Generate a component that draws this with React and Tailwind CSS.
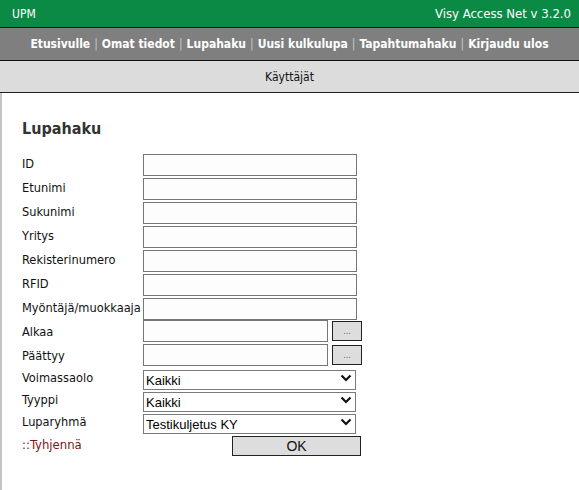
import { useState } from 'react';

const ui = { fontFamily: "'DejaVu Sans Condensed', 'DejaVu Sans', sans-serif" };
const ctl = { fontFamily: "'Liberation Sans', Arial, sans-serif" };

function Chevron() {
  return (
    <svg className="pointer-events-none absolute right-[4px] top-[5px] w-[12px] h-[10px]" viewBox="0 0 12 10">
      <path d="M1.5 2.5 L6 7 L10.5 2.5" fill="none" stroke="#111" strokeWidth="2.2" />
    </svg>
  );
}

function TextRow({ label }) {
  return (
    <>
      <label className="text-[12.7px] text-[#111] leading-[24px] whitespace-nowrap">{label}</label>
      <div className="h-[24px]">
        <input
          type="text"
          className="w-[214px] h-[22px] border border-[#767676] bg-[#fdfdfd] outline-none px-1 text-[13px]"
          style={ctl}
        />
      </div>
    </>
  );
}

function DateRow({ label }) {
  return (
    <>
      <label className="text-[12.7px] text-[#111] leading-[24px]">{label}</label>
      <div className="h-[24px] flex items-start gap-[4px]">
        <input
          type="text"
          className="w-[185px] h-[22px] border border-[#767676] bg-[#fdfdfd] outline-none px-1 text-[13px]"
          style={ctl}
        />
        <button className="mt-[1px] w-[30px] h-[20px] border border-[#222] bg-[#dddddd] text-[9px] text-[#666] leading-none">
          ...
        </button>
      </div>
    </>
  );
}

function SelectRow({ label, options, value, onChange }) {
  return (
    <>
      <label className="text-[12.7px] text-[#111] leading-[20px]">{label}</label>
      <div className="h-[22px]">
        <div className="relative w-[213px] h-[20px]">
          <select
            value={value}
            onChange={(e) => onChange(e.target.value)}
            className="appearance-none w-full h-full border border-[#7a7a7a] bg-white pl-[2px] text-[13px] text-black outline-none"
            style={ctl}
          >
            {options.map((o) => (
              <option key={o}>{o}</option>
            ))}
          </select>
          <Chevron />
        </div>
      </div>
    </>
  );
}

export default function App() {
  const [voimassa, setVoimassa] = useState('Kaikki');
  const [tyyppi, setTyyppi] = useState('Kaikki');
  const [ryhma, setRyhma] = useState('Testikuljetus KY');

  const links = ['Etusivulle', 'Omat tiedot', 'Lupahaku', 'Uusi kulkulupa', 'Tapahtumahaku', 'Kirjaudu ulos'];

  return (
    <div className="w-[579px] h-[490px] bg-white overflow-hidden" style={ui}>
      {/* Header */}
      <div className="h-[27px] bg-[#0b8a45] flex items-center justify-between pl-[12px] pr-[8px] text-white text-[12px]">
        <span>UPM</span>
        <span className="text-[13px]">Visy Access Net v 3.2.0</span>
      </div>
      <div className="h-[1px] bg-[#111]" />

      {/* Main nav */}
      <div className="h-[32px] bg-[#7f7f7f] flex items-center justify-center text-white font-bold text-[12px]">
        {links.map((l, i) => (
          <span key={l} className="flex items-center">
            {i > 0 && <span className="text-[#c8c8c8] font-normal mx-[4px]">|</span>}
            <a href="#" className="hover:underline">{l}</a>
          </span>
        ))}
      </div>
      <div className="h-[1px] bg-[#111]" />

      {/* Sub nav */}
      <div className="h-[31px] bg-[#dcdcdc] flex items-center justify-center text-[12px] text-[#111]">
        Käyttäjät
      </div>
      <div className="h-[1px] bg-[#222]" />

      {/* Content */}
      <div className="border-l-2 border-[#c4c4c4] h-full pl-[20px] pt-[26px]">
        <h1 className="text-[16px] font-bold text-[#333] leading-[20px] mb-[13px]">Lupahaku</h1>

        <div className="grid grid-cols-[121px_auto]">
          <TextRow label="ID" />
          <TextRow label="Etunimi" />
          <TextRow label="Sukunimi" />
          <TextRow label="Yritys" />
          <TextRow label="Rekisterinumero" />
          <TextRow label="RFID" />
          <TextRow label="Myöntäjä/muokkaaja" />
          <DateRow label="Alkaa" />
          <DateRow label="Päättyy" />
          <SelectRow label="Voimassaolo" options={['Kaikki', 'Voimassa', 'Vanhentunut']} value={voimassa} onChange={setVoimassa} />
          <SelectRow label="Tyyppi" options={['Kaikki', 'Henkilö', 'Ajoneuvo']} value={tyyppi} onChange={setTyyppi} />
          <SelectRow label="Luparyhmä" options={['Testikuljetus KY']} value={ryhma} onChange={setRyhma} />

          <a href="#" className="text-[13px] text-[#7b1515] leading-[22px]">::Tyhjennä</a>
          <div className="pl-[89px]">
            <button
              className="w-[129px] h-[20px] border border-[#222] bg-[#dddddd] text-[14px] text-[#111] leading-none"
              style={ctl}
            >
              OK
            </button>
          </div>
        </div>
      </div>
    </div>
  );
}
